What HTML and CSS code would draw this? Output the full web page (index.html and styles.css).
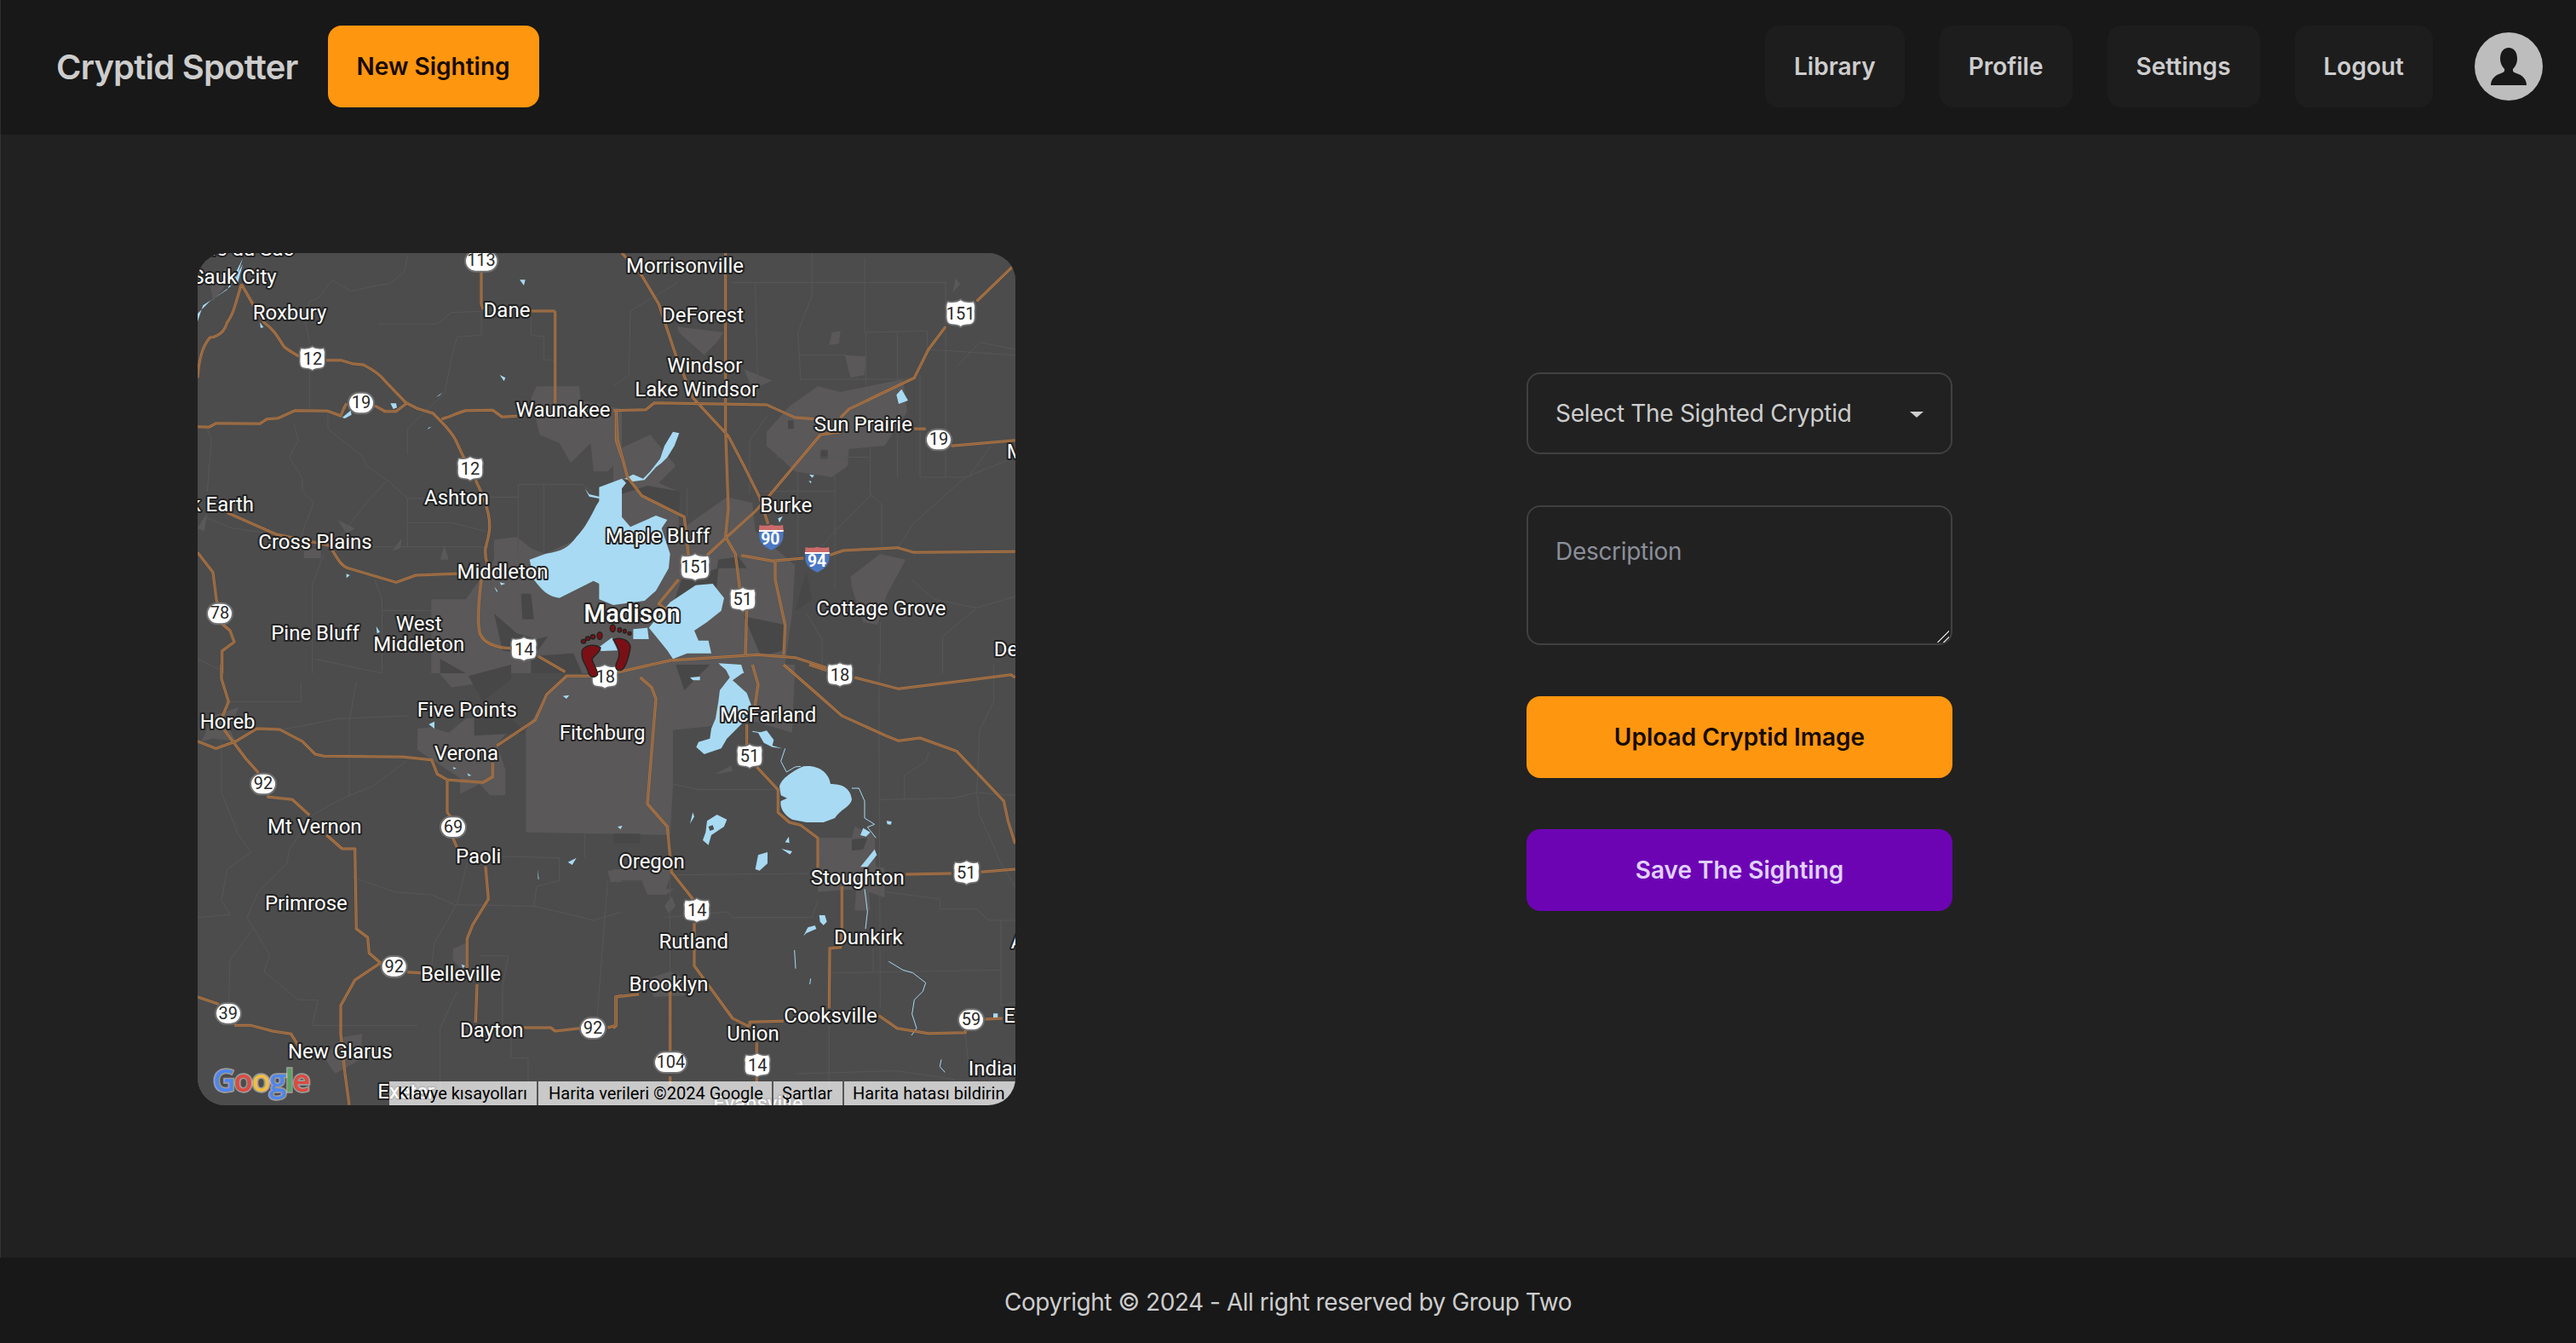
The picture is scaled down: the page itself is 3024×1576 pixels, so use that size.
FILE: index.html
```html
<!DOCTYPE html>
<html lang="en">
<head>
<meta charset="UTF-8" />
<title>Cryptid Spotter</title>
<link rel="stylesheet" href="styles.css">
</head>
<body>

<header class="topbar">
  <a class="brand" href="#">Cryptid Spotter</a>
  <a class="btn btn-orange" href="#">New Sighting</a>
  <nav class="topnav">
    <a class="btn btn-nav" href="#">Library</a>
    <a class="btn btn-nav" href="#">Profile</a>
    <a class="btn btn-nav" href="#">Settings</a>
    <a class="btn btn-nav" href="#">Logout</a>
  </nav>
  <div class="avatar">
    <svg viewBox="0 0 80 80" width="80" height="80"><path class="avatar-person" d="M40 18C34 18 30 23 30 31C30 36 32 40 35 43C35.500 46 34 47 31 48C24 50 19 55 19 62L61 62C61 55 56 50 49 48C46 47 44.500 46 45 43C48 40 50 36 50 31C50 23 46 18 40 18Z"/></svg>
  </div>
</header>

<main class="content">
  <section class="map">
    <svg class="map-canvas" viewBox="0 0 2880 3000" width="960" height="1000">
      <defs>
        <symbol id="us-shield" viewBox="-56 -52 112 104" overflow="visible">
          <path class="shield-body" d="M-44 -40C-32 -36 -14 -38 -4 -44L0 -47L4 -44C14 -38 32 -36 44 -40C50 -28 50 -18 48 -8C48 6 50 14 47 24C44 36 36 38 20 39C10 40 4 42 0 47C-4 42 -10 40 -20 39C-36 38 -44 36 -47 24C-50 14 -48 6 -48 -8C-50 -18 -50 -28 -44 -40Z"/>
        </symbol>
        <symbol id="interstate" viewBox="-50 -52 100 104" overflow="visible">
          <path class="is-blue" d="M-45 -22L45 -22C46 6 44 26 0 48C-44 26 -46 6 -45 -22Z"/>
          <path class="is-red" d="M-45 -24L-43 -46C-30 -42 -14 -42 0 -47C14 -42 30 -42 43 -46L45 -24Z"/>
          <rect class="is-white" x="-45" y="-27" width="90" height="6"/>
        </symbol>

        <g id="minor-roads">
          <g transform="translate(-6,-21)">
            <path d="M400,430L400,570M465,577L465,640L590,740L600,770L680,825L745,885L1030,880M345,620L360,680L330,740L375,815L375,860L415,900L380,990L370,1020M745,885L745,1055M745,970L900,970L1020,1000M450,1055L1030,1055M670,825L600,900L530,990L480,1060M745,730L745,640L800,585L870,520M875,520L900,390L920,315L1005,310L1005,220M1180,225L1180,310L1225,315L1225,395L1265,400M1135,835L1360,835L1420,880M1135,835L1135,1090M1225,835L1225,1080M1030,880L1135,880M1000,0L1005,90M745,30L735,85L680,130L640,135L545,155L480,115L430,180L400,190L385,260L400,340M160,130L240,240M640,270L850,270L900,230L1180,220M40,640L55,680L40,860M30,950L130,990L280,1010M450,1080L410,1190L410,1500M630,1170L655,1240L655,1500M655,1280L830,1280M830,1240L830,1500M6,1450L90,1490M420,1450L655,1500"/>
          </g>
          <g transform="translate(1464,-21)">
            <path d="M700,20L700,170L650,300L660,470M415,125L1170,125M500,125L510,540M225,125L60,225L55,450L0,490M885,40L885,300L1105,295L1105,360L1415,380M1000,295L1000,810M890,300L890,490M1170,120L1170,810M660,380L820,380M660,465L1060,465M905,700L905,870L945,905L945,1060M650,790L650,1080M780,790L780,1200M520,860L780,860M1080,450L1080,810L1240,810L1415,740M1240,810L1060,970L1000,1060M910,870L780,1000L730,1060M1415,360L1290,335L1210,420M1250,810L1330,700M940,1320L940,1500M1280,1270L1160,1370L1160,1500M1050,1170L1130,1240L1280,1270L1415,1230M680,1290L735,1380L735,1500M260,850L260,950M545,590L480,680L480,870M570,740L900,740"/>
          </g>
          <g transform="translate(-6,1449)">
            <path d="M370,60L370,130L200,130L100,130M90,250L90,450L150,600L195,660L110,720L90,830L120,880L6,890M180,890L260,1020L240,1080L360,1180L430,1180L410,1270L780,1270M565,60L540,200L540,460L480,490L410,530L330,650L320,700L220,800L180,890M200,930L120,1040L115,1200M300,230L500,190L750,180M740,340L620,430L540,460M570,755L700,800L830,810L910,845L1190,850L1200,780L1280,760L1280,680L1080,675M960,680L920,840L840,980L830,1060M1190,850L1320,880L1400,900L1500,870M1000,1025L1100,1025L1080,1130L1080,1270M920,1150L860,1280L860,1500M1110,1280L1110,1385L1170,1385L1170,1500M1370,590L1370,680M1450,760L1410,1280"/>
          </g>
          <g transform="translate(1464,1449)">
            <path d="M210,420L300,440L580,440M935,0L940,1210M940,475L1200,470L1280,450L1415,460M1025,475L1025,390L1100,340L1110,310M1280,450L1290,530L1340,640L1360,690L1415,780M210,740L690,735M180,890L400,870L420,890L700,890L720,830M960,800L1150,825L1150,860L1280,860L1320,900L1415,900M1365,900L1365,1200L1415,1190M765,1085L1365,1075M915,1000L915,1080M200,720L200,1100M760,1270L760,1500M1240,1300L1250,1400L1265,1450M640,1440L1000,1430L1200,1460M1340,0L1340,130L1290,230L1280,450"/>
          </g>
        </g>

        <g id="highways">
          <g transform="translate(-6,-21)">
            <path d="M160,130C140,200 130,240 110,265C100,300 80,315 50,318C25,345 10,400 6,460M160,130L200,200L240,265C280,295 290,320 310,350C325,365 345,372 362,385M460,398L510,398L550,410L590,414C620,430 650,450 665,470L740,548L780,568L835,585C870,620 900,650 915,680L945,745M985,820C1000,850 1020,890 1030,940C1040,990 1030,1020 1020,1060C1015,1090 1025,1110 1030,1130M6,632L45,634L72,620L225,622L250,605L290,602L350,575L465,577L510,594L520,570L530,550M630,558L665,578L705,578L745,548M865,605C900,598 920,582 950,575L1045,574L1078,598L1130,595M1265,225L1265,550M1175,225L1265,225M1005,90L1005,200L1012,220M110,935L280,1010L350,1025L470,1050C500,1100 510,1120 535,1130L705,1180L775,1155L920,1150M6,1075L60,1145L72,1240L85,1290M85,1320L120,1350L135,1390L92,1422L92,1500M1005,1170C995,1250 990,1320 1000,1360C1015,1395 1060,1410 1110,1412M1205,1440L1300,1495M1480,600L1480,680L1500,740"/>
          </g>
          <g transform="translate(1464,-21)">
            <path d="M30,20L100,100L160,200L220,380L280,530L405,665L460,770L515,880L545,975M395,20L395,500L395,640L405,920L395,1020L430,1080L445,1200M0,575L115,572L145,548L540,555L640,600L710,605M730,660L545,880L500,930L400,1020L330,1085M730,660L800,650M800,600L830,570L1060,460L1110,360L1170,280M1280,190L1415,60M1060,640L1100,640M1190,700L1415,680M10,580L15,680L50,810L100,875L250,950L265,1090M450,1085L560,1105L670,1095M760,1085L810,1068L1000,1058L1060,1075L1415,1072M570,1100L570,1170L605,1330L600,1435M230,1170L160,1255L190,1280M0,1500L200,1455L510,1435L640,1445L750,1480M470,1275L465,1440"/>
          </g>
          <g transform="translate(-6,1449)">
            <path d="M6,270L70,295L140,270L215,225L295,228L375,270L420,315L450,322L730,325L830,335L850,385L885,405L1010,415L1045,395L1045,345M1060,285L1195,195L1235,105L1305,40L1390,40M885,405L885,520L905,545M905,610L920,645M1020,710L1030,825L975,915L955,965L955,1075M990,1125L985,1260M1155,1278L1250,1278L1265,1290L1350,1280M1450,1278L1478,1270L1478,1170L1500,1165M745,1082L795,1085M100,230L175,330L220,380M250,465L340,475L400,530M460,600L515,648L560,648L565,930L605,960L610,1015L650,1050M650,1050L560,1110L510,1200L510,1300L525,1440L540,1550M6,1170L80,1195M135,1270L195,1270L270,1290L335,1300L360,1340M90,0L90,50L115,130L90,190"/>
          </g>
          <g transform="translate(1464,1449)">
            <path d="M600,0L720,105L805,180L960,250L1005,268L1080,258L1210,305L1375,480L1390,550L1415,630M850,45L1005,85L1250,55L1400,35L1415,45M690,0L750,20M95,45L135,80L150,120L120,490L190,570L205,730L280,825M285,910L285,1060L420,1245L480,1275M505,360L580,440L580,520L620,555L660,565L720,610L720,715M805,780L805,930L800,995L762,998L760,1210M1030,738L1190,735M1295,730L1415,720M935,1235L1000,1280L1110,1298L1240,1295L1240,1280M1310,1248L1370,1245M480,1258L600,1255M480,1255L480,1275M505,1330L505,1370M505,1450L505,1470M200,1150L200,1365M200,1450L200,1480M5,1170L90,1160M10,1170L10,1270L0,1280M470,210L470,285M490,0L510,70L495,170"/>
          </g>
        </g>
      </defs>

      <rect class="land" x="0" y="0" width="2880" height="3000"/>

      <g class="urban">
        <g transform="translate(-6,-21)">
          <path d="M1180,530L1200,490L1350,490L1355,540L1500,570L1500,740L1450,790L1400,790L1390,690L1320,760L1280,690L1210,660Z"/>
          <path d="M1050,1030L1130,1020L1180,1060L1230,1080L1400,1000L1500,900L1500,1500L830,1500L830,1240L950,1240L1000,1170L1050,1100Z"/>
          <path d="M380,1095L380,1065L440,1060L440,1095ZM500,960L560,990L530,1010ZM5,990L40,935L30,1000ZM50,130L120,60L100,140L60,190ZM690,1070L725,1025L720,1060ZM860,1100L875,1050L890,1100Z"/>
        </g>
        <g transform="translate(1464,-21)">
          <path d="M540,650L620,560L720,490L800,510L1020,465L1035,580L955,700L830,710L825,770L770,810L640,790L540,700Z"/>
          <path d="M225,280L390,300L360,340L320,380L230,300ZM460,430L560,470L490,500ZM760,345L770,300L800,295L795,340ZM815,380L890,385L885,450L835,460ZM1195,160L1205,110L1222,130Z"/>
          <path d="M0,720L130,660L220,770L160,830L230,860L230,1000L400,880L490,900L500,1000L640,1120L630,1290L600,1500L0,1500Z"/>
          <path d="M835,1160L940,1080L1030,1100L965,1220L930,1330L880,1320L840,1200Z"/>
        </g>
        <g transform="translate(-6,1449)">
          <path d="M780,225L830,220L890,240L950,190L1040,180L1095,240L1060,280L1090,370L1090,460L1035,460L1000,420L930,455L930,400L780,300Z"/>
          <path d="M1162,590L1162,230L1240,100L1300,40L1500,30L1680,30L1680,430L1670,600Z"/>
          <path d="M905,1000L950,980L955,1090L905,1040ZM450,1380L520,1310L585,1300L580,1390L490,1440ZM20,270L60,180L150,150L120,230L140,270L60,260ZM1450,725L1500,720L1500,765L1460,765Z"/>
          <path d="M830,0L1100,0L1100,50L900,80Z"/>
        </g>
        <g transform="translate(1464,1449)">
          <path d="M200,0L640,0L630,240L500,200L210,230Z"/>
          <path d="M725,610L840,610L850,570L920,600L925,712L955,715L955,820L900,800L905,865L850,865L855,790L720,800Z"/>
          <path d="M0,720L210,720L185,790L215,790L185,810L120,810L100,760L0,760ZM135,1100L200,1080L260,1110L250,1165L140,1170ZM180,850L205,815L220,850L195,875ZM360,385L415,355L420,375L365,385Z"/>
        </g>
      </g>

      <g class="urban-dark">
        <g transform="translate(1464,-21)">
          <path d="M10,875L30,830L55,810L100,875L230,945L235,860L120,840ZM370,1100L440,1090L470,1130L365,1130ZM615,610L635,610L635,640L615,640ZM730,715L755,715L755,745L730,745ZM240,1170L370,1130L360,1240L230,1290L210,1260ZM460,1300L605,1330L600,1420L520,1440ZM680,1140L700,1240L640,1280Z"/>
        </g>
        <g transform="translate(-6,-21)">
          <path d="M1145,1220L1180,1220L1190,1310L1150,1310ZM1050,1290L1130,1360L1200,1380L1240,1370L1190,1440L1080,1420ZM860,1450L950,1500L860,1500ZM1180,1440L1330,1430L1360,1500L1180,1500Z"/>
        </g>
        <g transform="translate(-6,1449)">
          <path d="M960,40L1110,0L1110,50L1010,130ZM980,250L1160,240L1100,180L980,180Z"/>
        </g>
        <g transform="translate(1464,1449)">
          <path d="M0,595L95,595L95,630L0,630ZM220,0L340,0L250,90ZM840,615L895,610L880,650L840,655ZM180,1480L400,1500L180,1500Z"/>
        </g>
      </g>

      <use class="road" href="#minor-roads"/>

      <g class="water">
        <g transform="translate(-6,-21)">
          <path d="M1500,845C1450,845 1430,880 1410,910C1390,950 1370,990 1340,1020C1310,1060 1290,1070 1230,1080L1175,1100L1190,1170C1220,1210 1240,1230 1280,1235L1400,1175L1440,1195L1420,1230L1550,1240L1500,1000Z"/>
          <path d="M165,40L145,100L120,140L50,190L5,235L5,265L25,205L110,150ZM140,105L145,135L165,60ZM1140,115L1160,115L1155,135ZM1070,450L1090,460L1085,472ZM845,528L868,512L858,522ZM685,550L705,550L708,565L695,570ZM515,600L545,575L548,590L525,603ZM225,265L238,282L228,285ZM530,1150L542,1155L530,1165ZM1050,1195L1062,1210L1060,1215ZM1070,1180L1090,1185L1075,1190ZM635,1335L648,1355L638,1360ZM820,635L830,632L815,642ZM1370,850L1385,870L1425,880L1420,885L1385,878Z"/>
        </g>
        <g transform="translate(1464,-21)">
          <path d="M-50,845L30,815L45,830L15,870L30,950L60,985L150,945L190,960L170,990L200,1080L195,1130L150,1210L110,1245L0,1260L-50,1240Z"/>
          <path d="M40,815L70,800L105,815L130,790L165,745L180,700L210,650L232,655L215,700L190,740L170,760L150,775L110,820L70,825Z"/>
          <path d="M125,1340L200,1250L290,1190L350,1185L390,1235L380,1280L330,1320L285,1350L300,1385L335,1385L345,1430L260,1430L210,1450L190,1420Z"/>
          <path d="M70,1345L120,1340L125,1380L70,1380ZM997,520L1015,500L1038,540L1005,552ZM690,800L708,803L700,812ZM688,822L698,825L695,832ZM580,955L596,948L585,970ZM370,1465L450,1470L460,1500L410,1500Z"/>
        </g>
        <g transform="translate(-6,1449)">
          <path d="M820,210L840,200L840,225ZM905,360L918,365L908,368ZM955,382L970,390L960,392ZM1292,110L1315,107L1305,120ZM1310,695L1340,680L1325,705ZM1203,720L1208,755L1205,755ZM935,1055L948,1060L940,1068Z"/>
        </g>
        <g transform="translate(1464,1449)">
          <path d="M375,0L450,0L455,30L420,55L470,100L485,140L470,190L430,230L400,260L380,295L320,315L292,290L300,272L340,260L345,225L360,190L370,130L375,90L410,45L395,15Z"/>
          <path d="M585,430C590,400 640,370 670,358C720,350 760,380 765,420C800,420 835,430 840,475C835,500 800,510 780,540L740,555L680,555L630,545C600,530 585,500 590,480L612,470L590,460Z"/>
          <path d="M510,240L540,232L565,265L560,285L595,295L560,290L530,275ZM870,600L880,575L905,590L890,605ZM870,712L920,650L928,670L895,712Z"/>
          <path fill-rule="evenodd" d="M325,590L330,550L365,528L400,545L390,570L345,600L335,635L315,618ZM335,570L350,565L355,580L340,585Z"/>
          <path d="M500,720L510,670L543,660L543,700L515,725ZM605,625L618,605L620,628ZM592,648L630,657L622,668ZM725,882L745,882L752,905L740,917L728,905ZM670,955L685,925L710,918L715,930L680,945ZM270,560L280,520L285,535ZM15,570L32,567L25,580ZM962,550L980,552L978,563L965,562ZM270,45L305,42L305,55L280,55ZM1338,1228L1354,1228L1354,1242L1338,1242Z"/>
        </g>
        <g transform="translate(1224,1149)">
          <path d="M180,245L235,205L255,250L200,252Z"/>
        </g>
      </g>

      <g class="stream">
        <g transform="translate(1464,1449)">
          <path d="M490,235L520,240M605,295L590,340L610,378L640,360L660,358M840,435L865,435L885,480L885,540L920,562L895,572L925,610M885,790L895,870L888,930M970,1045L1020,1075L1055,1085L1100,1120L1090,1150L1060,1180L1052,1230L1068,1280L1050,1305M638,1005L642,1070M695,1105L692,1125M1155,1390L1150,1415L1168,1435"/>
        </g>
      </g>

      <use class="hw-outer" href="#highways"/>
      <use class="hw-inner" href="#highways"/>

      <g class="pad-state">
        <g transform="translate(-6,-21)">
          <rect x="948" y="12" width="115" height="74" rx="37"/>
          <rect x="537" y="512" width="90" height="74" rx="37"/>
          <rect x="39" y="1253" width="90" height="74" rx="37"/>
        </g>
        <g transform="translate(1464,-21)">
          <rect x="1101" y="641" width="90" height="74" rx="37"/>
        </g>
        <g transform="translate(-6,1449)">
          <rect x="192" y="383" width="90" height="74" rx="37"/>
          <rect x="861" y="535" width="90" height="74" rx="37"/>
          <rect x="653" y="1026" width="90" height="74" rx="37"/>
          <rect x="69" y="1191" width="90" height="74" rx="37"/>
          <rect x="1353" y="1243" width="90" height="74" rx="37"/>
        </g>
        <g transform="translate(1464,1449)">
          <rect x="144" y="1363" width="115" height="74" rx="37"/>
          <rect x="1215" y="1213" width="90" height="74" rx="37"/>
        </g>
      </g>

      <g class="shields">
        <g transform="translate(-6,-21)">
          <use href="#us-shield" x="358" y="340" width="104" height="104"/>
          <use href="#us-shield" x="914" y="728" width="104" height="104"/>
          <use href="#us-shield" x="1103" y="1363" width="104" height="104"/>
        </g>
        <g transform="translate(1464,-21)">
          <use href="#us-shield" x="1164" y="178" width="118" height="110"/>
          <use href="#us-shield" x="229" y="1072" width="118" height="110"/>
          <use href="#us-shield" x="404" y="1188" width="104" height="104"/>
        </g>
        <g transform="translate(-6,1449)">
          <use href="#us-shield" x="1388" y="-10" width="104" height="104"/>
        </g>
        <g transform="translate(1464,1449)">
          <use href="#us-shield" x="746" y="-17" width="104" height="104"/>
          <use href="#us-shield" x="428" y="270" width="104" height="104"/>
          <use href="#us-shield" x="1192" y="680" width="104" height="104"/>
          <use href="#us-shield" x="242" y="813" width="104" height="104"/>
          <use href="#us-shield" x="455" y="1358" width="104" height="104"/>
        </g>
        <g transform="translate(1464,-21)">
          <use href="#interstate" x="508" y="972" width="96" height="100"/>
          <use href="#interstate" x="670" y="1050" width="96" height="100"/>
        </g>
      </g>

      <g class="shield-text">
        <g transform="translate(-6,-21)">
          <text x="1005" y="67">113</text>
          <text x="411" y="414">12</text>
          <text x="582" y="567">19</text>
          <text x="966" y="801">12</text>
          <text x="84" y="1309">78</text>
          <text x="1156" y="1436">14</text>
        </g>
        <g transform="translate(1464,-21)">
          <text x="1223" y="256">151</text>
          <text x="1146" y="697">19</text>
          <text x="288" y="1146">151</text>
          <text x="455" y="1261">51</text>
          <text class="is-num" x="553" y="1046">90</text>
          <text class="is-num" x="717" y="1124">94</text>
        </g>
        <g transform="translate(-6,1449)">
          <text x="1442" y="64">18</text>
          <text x="237" y="438">92</text>
          <text x="906" y="590">69</text>
          <text x="698" y="1082">92</text>
          <text x="113" y="1247">39</text>
          <text x="1398" y="1299">92</text>
        </g>
        <g transform="translate(1464,1449)">
          <text x="798" y="56">18</text>
          <text x="480" y="343">51</text>
          <text x="1243" y="753">51</text>
          <text x="295" y="886">14</text>
          <text x="202" y="1419">104</text>
          <text x="508" y="1431">14</text>
          <text x="1260" y="1269">59</text>
        </g>
      </g>

      <g class="labels">
        <g transform="translate(-6,-21)">
          <text class="end" x="345" y="30">Prairie du Sac</text>
          <text x="135" y="128">Sauk City</text>
          <text x="330" y="255">Roxbury</text>
          <text x="1095" y="247">Dane</text>
          <text x="1293" y="596">Waunakee</text>
          <text x="918" y="907">Ashton</text>
          <text class="end" x="204" y="930">Black Earth</text>
          <text x="420" y="1062">Cross Plains</text>
          <text x="1080" y="1168">Middleton</text>
          <text x="420" y="1384">Pine Bluff</text>
          <text x="785" y="1350">West</text>
          <text x="785" y="1422">Middleton</text>
        </g>
        <g transform="translate(1464,-21)">
          <text x="252" y="90">Morrisonville</text>
          <text x="315" y="264">DeForest</text>
          <text x="322" y="442">Windsor</text>
          <text x="293" y="525">Lake Windsor</text>
          <text x="880" y="648">Sun Prairie</text>
          <text class="start" x="1385" y="745">Marshall</text>
          <text x="608" y="933">Burke</text>
          <text class="end" x="340" y="1040">Maple Bluff</text>
          <text x="943" y="1295">Cottage Grove</text>
          <text class="start" x="1340" y="1440">Deerfield</text>
        </g>
        <g transform="translate(-6,1449)">
          <text class="start" x="14" y="225">Horeb</text>
          <text x="955" y="182">Five Points</text>
          <text class="start" x="1280" y="265">Fitchburg</text>
          <text x="952" y="335">Verona</text>
          <text x="418" y="595">Mt Vernon</text>
          <text x="995" y="700">Paoli</text>
          <text x="388" y="865">Primrose</text>
          <text x="933" y="1113">Belleville</text>
          <text x="1042" y="1310">Dayton</text>
          <text x="508" y="1385">New Glarus</text>
          <text class="start" x="640" y="1528">Exeter</text>
        </g>
        <g transform="translate(1464,1449)">
          <text x="545" y="200">McFarland</text>
          <text x="135" y="718">Oregon</text>
          <text x="860" y="775">Stoughton</text>
          <text x="283" y="998">Rutland</text>
          <text x="898" y="985">Dunkirk</text>
          <text x="195" y="1150">Brooklyn</text>
          <text x="765" y="1260">Cooksville</text>
          <text x="492" y="1323">Union</text>
          <text class="start" x="1250" y="1445">Indian Lake</text>
          <text class="start" x="1375" y="1260">Edgerton</text>
          <text class="start" x="1400" y="1000">Albion</text>
          <text x="510" y="1570">Evansville</text>
        </g>
        <text class="city" x="1530" y="1299">Madison</text>
      </g>

      <g class="marker" transform="translate(1224,1149)">
        <path d="M130,250C140,230 175,225 195,240C195,255 175,265 165,280C170,300 185,320 185,335C175,350 155,345 150,320C140,295 125,280 130,250Z"/>
        <path d="M240,212C265,200 300,215 300,240C295,275 280,320 265,320C245,320 245,305 255,285C265,265 260,240 240,212Z"/>
        <ellipse cx="135" cy="218" rx="8" ry="7"/>
        <ellipse cx="150" cy="208" rx="8" ry="7"/>
        <ellipse cx="168" cy="202" rx="8" ry="8"/>
        <ellipse cx="192" cy="198" rx="9" ry="13"/>
        <ellipse cx="238" cy="172" rx="9" ry="13"/>
        <ellipse cx="262" cy="178" rx="7" ry="8"/>
        <ellipse cx="280" cy="182" rx="6" ry="7"/>
        <ellipse cx="297" cy="190" rx="6" ry="6"/>
      </g>

      <text class="google" x="54" y="2952"><tspan class="g-blue">G</tspan><tspan class="g-red">o</tspan><tspan class="g-yellow">o</tspan><tspan class="g-blue">g</tspan><tspan class="g-green">l</tspan><tspan class="g-red">e</tspan></text>
    </svg>

    <div class="map-attrib">
      <span class="attrib-item attrib-keys">Klavye kısayolları</span>
      <span class="attrib-item attrib-data">Harita verileri ©2024 Google</span>
      <span class="attrib-item attrib-terms">Şartlar</span>
      <span class="attrib-item attrib-report">Harita hatası bildirin</span>
    </div>
  </section>

  <form class="sighting-form">
    <div class="select-wrap">
      <select class="field field-select">
        <option>Select The Sighted Cryptid</option>
      </select>
    </div>
    <div class="text-wrap">
      <textarea class="field field-text" placeholder="Description"></textarea>
    </div>
    <button type="button" class="btn btn-orange btn-wide">Upload Cryptid Image</button>
    <button type="button" class="btn btn-purple btn-wide">Save The Sighting</button>
  </form>
</main>

<footer class="footer">Copyright © 2024 - All right reserved by Group Two</footer>

</body>
</html>
```

FILE: styles.css
```css
* { box-sizing: border-box; }
html, body { margin: 0; height: 100%; }
body { background: #212121; color: #cdcdcd; font-family: Inter, 'Liberation Sans', sans-serif; font-size: 28px; display: flex; flex-direction: column; min-height: 100vh; overflow: hidden; }
a { text-decoration: none; }

.topbar { height: 158px; flex: none; background: #181818; display: flex; align-items: center; padding: 0 39px 2px 66px; box-shadow: inset 1px 0 0 #2e2e2e; }
.brand { color: #cdcdcd; font-size: 40px; font-weight: 600; letter-spacing: -0.8px; margin-right: 35px; }
.topnav { margin-left: auto; display: flex; gap: 41px; }
.avatar { width: 80px; height: 80px; border-radius: 50%; background: #bdbdbd; margin-left: 49px; overflow: hidden; }
.avatar svg { display: block; }
.avatar-person { fill: #181818; }

.btn { height: 96px; display: inline-flex; align-items: center; justify-content: center; padding: 0 34px; border: none; border-radius: 16px; font-family: inherit; font-size: 28px; font-weight: 600; cursor: pointer; }
.btn-orange { background: #ff960f; color: #160b00; }
.btn-purple { background: #6d04b4; color: #e0d2fe; }
.btn-nav { background: #1d1d1d; color: #cdcdcd; }
.btn-wide { width: 100%; }

.content { flex: 1; display: flex; align-items: flex-start; gap: 600px; padding: 139px 0 0 232px; box-shadow: inset 1px 0 0 #333; }

.map { position: relative; width: 960px; height: 1000px; flex: none; border-radius: 32px; overflow: hidden; background: #4b4b4b; }
.map-canvas { display: block; }
.land { fill: #4c4c4c; }
.urban path { fill: #5a5858; }
.urban-dark path { fill: #474747; }
.road { fill: none; stroke: #575757; stroke-width: 3; stroke-linejoin: round; }
.water path { fill: #a8daf3; }
.stream path { fill: none; stroke: #a8daf3; stroke-width: 3; }
.hw-outer { fill: none; stroke: #b8743a; stroke-width: 9; stroke-linejoin: round; }
.hw-inner { fill: none; stroke: #7a6350; stroke-width: 3; stroke-linejoin: round; }

.pad-state rect { fill: #fff; stroke: #707070; stroke-width: 6; }
.shield-body { fill: #fff; stroke: #707070; stroke-width: 5; stroke-linejoin: round; }
.is-blue { fill: #4a78c4; stroke: #555; stroke-width: 2; }
.is-red { fill: #cc6a6a; }
.is-white { fill: #fff; }
.shield-text text { font-family: Roboto, sans-serif; font-size: 60px; fill: #2a2a2a; text-anchor: middle; }
.shield-text .is-num { fill: #fff; font-weight: 700; font-size: 58px; }

.labels text { font-family: Roboto, sans-serif; font-size: 72px; fill: #fff; stroke: #222; stroke-width: 12px; stroke-linejoin: round; paint-order: stroke; text-anchor: middle; }
.labels .start { text-anchor: start; }
.labels .end { text-anchor: end; }
.labels .city { font-size: 88px; font-weight: 500; }

.marker path, .marker ellipse { fill: #7a1015; stroke: #222; stroke-width: 4; }

.google { font-family: 'Open Sans', sans-serif; font-size: 108px; font-weight: 600; letter-spacing: -4px; stroke: rgba(255,255,255,.45); stroke-width: 10px; paint-order: stroke; }
.g-blue { fill: #4f86ec; }
.g-red { fill: #dc4b3f; }
.g-yellow { fill: #f2bd42; }
.g-green { fill: #58a55c; }

.map-attrib { position: absolute; left: 225px; right: 0; bottom: 0; height: 28px; display: flex; background: rgba(255,255,255,.7); color: #000; font-family: Roboto, sans-serif; font-size: 20px; line-height: 28px; white-space: nowrap; }
.attrib-item { padding: 0 10px; border-right: 2px solid #555; }
.attrib-keys { width: 175px; }
.attrib-data { width: 276px; padding-left: 12px; }
.attrib-terms { width: 83px; }
.attrib-report { border-right: none; }

.sighting-form { width: 500px; flex: none; display: flex; flex-direction: column; gap: 60px; padding-top: 140px; }
.field { width: 100%; background: #212121; color: #cdcdcd; border: 2px solid #404040; border-radius: 16px; font-family: inherit; font-size: 28px; letter-spacing: -0.3px; outline: none; }
.select-wrap { position: relative; height: 96px; }
.select-wrap::after { content: ''; position: absolute; right: 34px; top: 46px; border-left: 8px solid transparent; border-right: 8px solid transparent; border-top: 7px solid #cdcdcd; pointer-events: none; }
.field-select { height: 96px; padding: 0 32px; appearance: none; }
.text-wrap { position: relative; height: 164px; }
.text-wrap::after { content: ''; position: absolute; right: 4px; bottom: 3px; width: 14px; height: 14px; background: linear-gradient(135deg, transparent 48%, #c4c4c4 48%, #c4c4c4 56%, transparent 56%, transparent 72%, #c4c4c4 72%, #c4c4c4 80%, transparent 80%); pointer-events: none; }
.field-text { display: block; height: 164px; padding: 32px; line-height: 40px; resize: none; }
.field-text::placeholder { color: #8b8f99; }

.footer { height: 100px; flex: none; background: #181818; display: flex; align-items: center; justify-content: center; color: #cdcdcd; letter-spacing: -0.46px; padding-top: 4px; }
```
